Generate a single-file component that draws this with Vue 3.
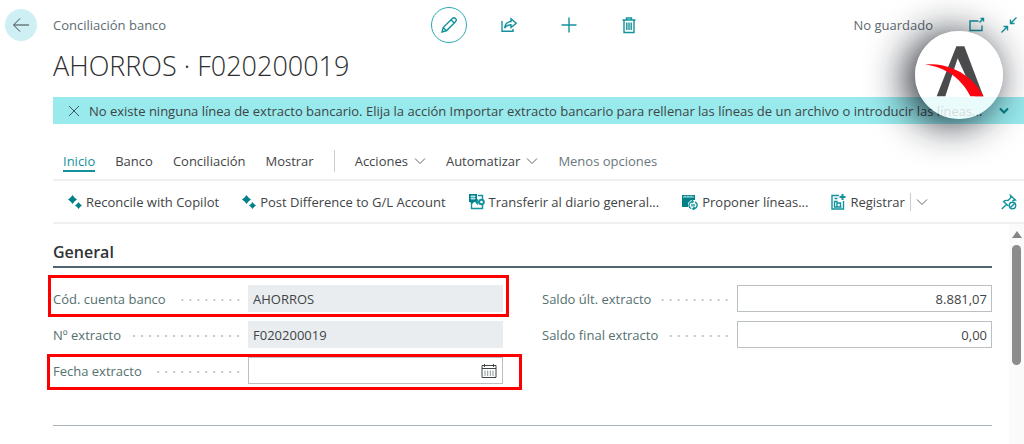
<template>
  <div class="page">
    <header class="topbar">
      <button class="back" aria-label="Atrás">
        <svg width="18" height="18" viewBox="0 0 18 18"><path d="M17 9H2M8 2.500L1.500 9L8 15.500" /></svg>
      </button>
      <div class="topbar-side">
        <span class="crumb">Conciliación banco</span>
      </div>
      <div class="tools">
        <button class="tool tool-active" aria-label="Editar">
          <svg width="18" height="18" viewBox="0 0 18 18">
            <path d="M2 16L3.200 11.600L12.300 2.500A2.200 2.200 0 0 1 15.500 5.700L6.400 14.800ZM3.200 11.600L6.400 14.800M11 3.800L14.200 7" />
          </svg>
        </button>
        <button class="tool" aria-label="Compartir">
          <svg width="18" height="18" viewBox="0 0 18 18">
            <path d="M2 5V15.300H13V13M4.500 12.200C5 8 7.500 5.700 11 5.500V2.700L16.200 7.300L11 11.500V8.800C8 8.800 6 9.800 4.500 12.200Z" />
          </svg>
        </button>
        <button class="tool" aria-label="Nuevo">
          <svg width="18" height="18" viewBox="0 0 18 18"><path d="M9 1.500V16.500M1.500 9H16.500" /></svg>
        </button>
        <button class="tool" aria-label="Eliminar">
          <svg width="18" height="18" viewBox="0 0 18 18">
            <path d="M2.500 4H15.500M6.500 4V2H11.500V4M4 4V16.500H14V4M6.800 6.500V14M9 6.500V14M11.200 6.500V14" />
          </svg>
        </button>
      </div>
      <div class="topbar-side topbar-right">
        <span class="crumb">No guardado</span>
        <div class="window-tools">
          <button class="plain" aria-label="Abrir en ventana nueva">
            <svg width="16" height="16" viewBox="0 0 16 16">
              <path d="M9.500 4H1V13.500H13V8.500M10.500 5.500L14.500 1.500M11.500 1.500H14.500V4.500" />
            </svg>
          </button>
          <button class="plain" aria-label="Contraer">
            <svg width="16" height="16" viewBox="0 0 16 16">
              <path d="M15.500 .5L10 6M9.500 2.500V6.500H13.500M.5 15.500L6 10M2.500 9.500H6.500V13.500" />
            </svg>
          </button>
        </div>
      </div>
    </header>

    <div class="content">
      <h1>AHORROS · F020200019</h1>

      <div class="notice">
        <button class="plain notice-close" aria-label="Cerrar">
          <svg width="12" height="12" viewBox="0 0 12 12"><path d="M1 1L11 11M11 1L1 11" /></svg>
        </button>
        <span class="notice-text">No existe ninguna línea de extracto bancario. Elija la acción Importar extracto bancario para rellenar las líneas de un archivo o introducir las líneas...</span>
        <button class="plain notice-more" aria-label="Más">
          <svg width="10" height="8" viewBox="0 0 10 8"><path d="M1 1.500L5 5.500L9 1.500" /></svg>
        </button>
      </div>

      <nav class="tabs">
        <a
          v-for="tab in tabs"
          :key="tab"
          href="#"
          class="tab"
          :class="{ active: tab === activeTab }"
          @click.prevent="activeTab = tab"
        >{{ tab }}</a>
        <span class="divider"></span>
        <button v-for="menu in menus" :key="menu" class="plain menu">
          {{ menu }}
          <svg class="chevron" width="12" height="8" viewBox="0 0 12 8"><path d="M1 1.500L6 6.500L11 1.500" /></svg>
        </button>
        <button class="plain muted">Menos opciones</button>
      </nav>

      <div class="actions">
        <button v-for="name in copilotActions" :key="name" class="plain action">
          <svg width="14" height="14" viewBox="0 0 14 14">
            <path class="solid" d="M4.500 0L6.400 2.600L9 4.500L6.400 6.400L4.500 9L2.600 6.400L0 4.500L2.600 2.600ZM10.500 7L12 9L14 10.500L12 12L10.500 14L9 12L7 10.500L9 9Z" />
          </svg>
          {{ name }}
        </button>
        <button class="plain action">
          <svg width="16" height="16" viewBox="0 0 16 16">
            <path class="solid" d="M0 0H8V8H5L3 10L1 8H0Z" />
            <path d="M9 1.500H13.500V5M2.500 9V14.500H13.500V11" />
            <path class="gap" d="M1.500 2.500H6.500M1.500 4.500H6.500M3 1V6M5 1V6" />
            <circle cx="12.500" cy="8" r="2.300" class="ring" />
            <path d="M7 8H10M9 5.500L7 8L9 10.500" />
          </svg>
          Transferir al diario general...
        </button>
        <button class="plain action">
          <svg width="16" height="16" viewBox="0 0 16 16">
            <path class="solid" d="M0 1H13V6H9L6 9V13H0Z" />
            <path class="gap" d="M1 3H12M3 1.500V3M6 1.500V3M9 1.500V3" />
            <path d="M7 12A4 4 0 0 1 11 7.500L10 6M11 7.500L9.500 9M15 10A4 4 0 0 1 11 15L12 16M11 15L12.500 13M7 12A4 4 0 0 0 9 14.500M13 8A4 4 0 0 1 15 10M10 10V12.500M12 10V12.500" />
          </svg>
          Proponer líneas...
        </button>
        <div class="split">
          <button class="plain action">
            <svg width="15" height="16" viewBox="0 0 15 16">
              <path d="M8 1.500H1V15H12.500V7M3.500 13V7.500H6V13M6 9H9.500V13M3 13H10.500M3.500 4.500H6.500" />
              <path class="ring" d="M11.500 0V6M8.500 3H14.500" />
            </svg>
            Registrar
          </button>
          <span class="split-line"></span>
          <button class="plain" aria-label="Más opciones de registro">
            <svg class="chevron" width="12" height="8" viewBox="0 0 12 8"><path d="M1 1.500L6 6.500L11 1.500" /></svg>
          </button>
        </div>
        <button class="plain pin" aria-label="Desanclar">
          <svg width="16" height="16" viewBox="0 0 16 16">
            <path d="M.8 15L5.500 10.500M7.500 12L2.500 7.500C4 6.300 5.500 6.300 7 6.500L10 3.500L9.500 1.500L14.500 6L12.500 6.200L11.500 7.200" />
            <circle cx="11.500" cy="11.500" r="3.200" />
            <path d="M9.400 13.500L13.600 9.500" />
          </svg>
        </button>
      </div>
    </div>

    <div class="body">
      <main>
        <h2>General</h2>
        <div class="fields">
          <div class="column">
            <div class="field marked">
              <label for="account">Cód. cuenta banco</label>
              <input id="account" value="AHORROS" readonly>
            </div>
            <div class="field">
              <label for="statement">Nº extracto</label>
              <input id="statement" value="F020200019" readonly>
            </div>
            <div class="field marked marked-wide">
              <label for="date">Fecha extracto</label>
              <div class="date-box">
                <input id="date" v-model="date">
                <button class="plain" aria-label="Elegir fecha">
                  <svg width="16" height="16" viewBox="0 0 16 16">
                    <path d="M1 2.500H15V14.500H1ZM1 5.500H15M3.500 1V4M12.500 1V4" />
                    <path class="days" d="M4 7.500V13M6.700 7.500V13M9.300 7.500V13M12 7.500V13" />
                  </svg>
                </button>
              </div>
            </div>
          </div>
          <div class="column">
            <div class="field">
              <label for="last">Saldo últ. extracto</label>
              <input id="last" v-model="lastBalance" class="amount">
            </div>
            <div class="field">
              <label for="final">Saldo final extracto</label>
              <input id="final" v-model="finalBalance" class="amount">
            </div>
          </div>
        </div>
      </main>
      <div class="scrollbar">
        <span class="arrow"></span>
        <span class="thumb"></span>
      </div>
    </div>

    <div class="logo">
      <svg width="88" height="88" viewBox="0 0 264 264">
        <path class="letter" d="M124 46H148L205 196H180L128 82L91 196H65Z" />
        <path class="swoosh-gap" d="M84 108C130 120 150 158 164 196" />
        <path class="swoosh" d="M30 101C76 94 126 112 159 139C180 156 194 175 206 196H166C153 169 132 145 105 127C82 112 58 103 30 101Z" />
      </svg>
    </div>
  </div>
</template>

<script setup>
import { ref } from 'vue'

const tabs = ['Inicio', 'Banco', 'Conciliación', 'Mostrar']
const activeTab = ref('Inicio')
const menus = ['Acciones', 'Automatizar']
const copilotActions = ['Reconcile with Copilot', 'Post Difference to G/L Account']

const date = ref('')
const lastBalance = ref('8.881,07')
const finalBalance = ref('0,00')
</script>

<style>
body {
  margin: 0;
  background: #fff;
}
</style>

<style scoped>
.page {
  position: relative;
  display: flex;
  flex-direction: column;
  min-height: 100vh;
  overflow: hidden;
  font-family: "Segoe UI", "Open Sans", "Noto Sans", sans-serif;
  font-size: 13px;
  line-height: 20px;
  color: #3f4446;
}

button,
input {
  font: inherit;
  color: inherit;
}

button {
  display: flex;
  align-items: center;
  justify-content: center;
  cursor: pointer;
}

svg {
  flex: none;
  fill: none;
  stroke: #12929d;
  stroke-width: 1.4;
}

.solid {
  fill: #008089;
  stroke: none;
}

.gap {
  stroke: #b5e3e6;
  stroke-width: 1;
}

.ring {
  stroke-width: 2;
}

.plain {
  padding: 0;
  border: 0;
  background: none;
  white-space: nowrap;
}

/* top bar */
.topbar {
  display: flex;
  align-items: center;
  padding: 7px 0 0 5px;
}

.back {
  width: 32px;
  height: 32px;
  margin-right: 16px;
  padding: 0;
  border: 0;
  border-radius: 50%;
  background: #ceeff3;
}

.back svg {
  stroke: #3f4446;
  stroke-width: 1;
}

.topbar-side {
  flex: 1;
}

.topbar-right {
  display: flex;
  align-items: center;
  justify-content: flex-end;
  gap: 36px;
}

.crumb {
  color: #5d6b73;
}

.tools {
  display: flex;
  gap: 24px;
}

.tool {
  width: 36px;
  height: 36px;
  padding: 0;
  border: 0;
  border-radius: 50%;
  background: none;
}

.tool-active {
  border: 1px solid #2ba9b3;
}

.window-tools {
  display: flex;
  gap: 16px;
  margin-right: 7px;
}

/* title, notice and command bars */
.content {
  padding-left: 53px;
}

h1 {
  margin: 5px 0 13px;
  font-size: 27px;
  font-weight: 300;
  line-height: 36px;
  color: #2c2f31;
}

.notice {
  display: flex;
  align-items: center;
  height: 27px;
  padding: 0 15px;
  background: #98eaed;
}

.notice svg {
  stroke: #3f5a60;
  stroke-width: 1;
}

.notice-text {
  flex: 1;
  min-width: 0;
  margin-left: 9px;
  overflow: hidden;
  white-space: nowrap;
}

.notice .notice-more svg {
  stroke: #008089;
  stroke-width: 2;
}

.tabs {
  display: flex;
  align-items: center;
  gap: 20px;
  height: 36px;
  margin-top: 19px;
  padding-left: 10px;
  border-bottom: 2px solid #f0f0f0;
}

.tab {
  padding-top: 2px;
  border-bottom: 2px solid transparent;
  color: inherit;
  line-height: 18px;
  text-decoration: none;
}

.tab.active {
  border-color: #12929d;
  color: #12929d;
}

.divider {
  width: 1px;
  height: 22px;
  background: #ccc;
}

.menu {
  gap: 6px;
}

.chevron {
  stroke: #666;
  stroke-width: 1;
}

.muted {
  color: #6b7880;
}

.actions {
  display: flex;
  align-items: center;
  gap: 23px;
  height: 41px;
  padding: 0 7px 0 15px;
  border-bottom: 2px solid #f0f0f0;
}

.action {
  gap: 4px;
}

.split {
  display: flex;
  align-items: center;
  gap: 5px;
}

.split-line {
  width: 1px;
  height: 18px;
  background: #ccc;
}

.pin {
  margin-left: auto;
}

/* form */
.body {
  display: flex;
  flex: 1;
}

main {
  flex: 1;
  padding: 15px 17px 17px 53px;
}

h2 {
  margin: 0;
  padding-bottom: 1px;
  border-bottom: 2px solid #51646f;
  font-size: 16px;
  font-weight: 600;
  line-height: 26px;
  color: #2f3335;
}

.fields {
  display: grid;
  grid-template-columns: 1fr 1fr;
  gap: 39px;
  padding: 17px 0 41px;
  border-bottom: 1px solid #aab2b7;
}

.column {
  display: flex;
  flex-direction: column;
  gap: 9px;
}

.field {
  position: relative;
  display: grid;
  grid-template-columns: 13fr 17fr;
  height: 27px;
}

.field label {
  display: flex;
  align-items: center;
  color: #54706f;
  white-space: nowrap;
}

.field label::after {
  content: "";
  flex: 1;
  height: 2px;
  margin: 2px 6px 0 10px;
  background: radial-gradient(circle, #c4c9cb 1px, transparent 1px) right / 8px 2px repeat-x;
}

.field input {
  box-sizing: border-box;
  width: 100%;
  min-width: 0;
  height: 27px;
  padding: 0 4px;
  border: 1px solid #b9bfc3;
  border-radius: 0;
  background: #fff;
}

.field input:read-only {
  border-color: #e9edf0;
  background: #e9edf0;
}

.field .amount {
  text-align: right;
}

.date-box {
  display: flex;
  border: 1px solid #b9bfc3;
  padding-right: 5px;
}

.field .date-box input {
  height: 25px;
  border: 0;
}

.date-box svg {
  stroke: #3f4446;
  stroke-width: 1;
}

.date-box .days {
  stroke: #8b9496;
}

/* red frames around the fields to fill in */
.marked::after {
  content: "";
  position: absolute;
  inset: -10px -6px -5px -5px;
  border: 3px solid #f00;
  pointer-events: none;
}

.marked-wide::after {
  inset: -3px -19px -6px -6px;
}

.scrollbar {
  display: flex;
  flex-direction: column;
  align-items: center;
  gap: 7px;
  width: 15px;
  padding-top: 7px;
  background: #fafafa;
}

.arrow {
  border: 5px solid transparent;
  border-top: 0;
  border-bottom: 7px solid #868686;
}

.thumb {
  width: 9px;
  height: 120px;
  border-radius: 5px;
  background: #8b8c8b;
}

/* company badge over the top right corner */
.logo {
  position: absolute;
  top: 31px;
  right: 21px;
  width: 88px;
  height: 88px;
  border-radius: 50%;
  background: rgba(255, 255, 255, 0.8);
  box-shadow: -8px 4px 40px 0 rgba(10, 15, 25, 0.95);
}

.logo svg {
  display: block;
  stroke: none;
}

.letter {
  fill: #4b4b4d;
}

.swoosh-gap {
  stroke: #fff;
  stroke-width: 5;
}

.swoosh {
  fill: #fb0510;
}
</style>
